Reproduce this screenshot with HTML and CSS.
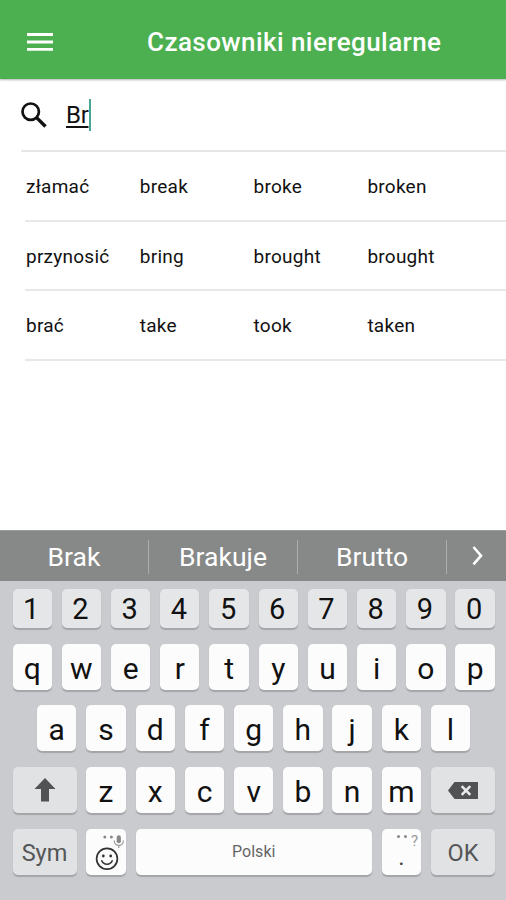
FILE: index.html
```html
<!DOCTYPE html>
<html lang="pl">
<head>
    <meta charset="UTF-8">
    <meta name="viewport" content="width=device-width, initial-scale=1.0">
    <title>Czasowniki nieregularne</title>
    <link rel="stylesheet" href="styles.css">
</head>
<body>
    <header class="topbar">
        <svg class="menu-icon" viewBox="0 0 26 18"><path d="M0 1.5h26M0 9h26M0 16.4h26" stroke="#fff" stroke-width="2.9"/></svg>
        <h1>Czasowniki nieregularne</h1>
    </header>

    <main>
        <div class="search">
            <svg class="search-icon" viewBox="0 0 26 26"><circle cx="9.7" cy="9.7" r="8.2" fill="none" stroke="#111" stroke-width="2.7"/><path d="M15.6 15.6L24.5 24.5" stroke="#111" stroke-width="3.4"/></svg>
            <span class="query">Br</span><span class="caret"></span>
        </div>
        <div class="verbs">
            <div class="verb"><span>złamać</span><span>break</span><span>broke</span><span>broken</span></div>
            <div class="verb"><span>przynosić</span><span>bring</span><span>brought</span><span>brought</span></div>
            <div class="verb"><span>brać</span><span>take</span><span>took</span><span>taken</span></div>
        </div>
    </main>

    <section class="keyboard">
        <div class="suggestions">
            <span>Brak</span>
            <span>Brakuje</span>
            <span>Brutto</span>
            <span class="more"><svg width="12" height="20" viewBox="0 0 12 20"><path d="M1.5 1L9 9.7L1.5 18.4" fill="none" stroke="#fff" stroke-width="2.6"/></svg></span>
        </div>
        <div class="keys">
            <div class="row numbers">
                <span class="key">1</span><span class="key">2</span><span class="key">3</span><span class="key">4</span><span class="key">5</span><span class="key">6</span><span class="key">7</span><span class="key">8</span><span class="key">9</span><span class="key">0</span>
            </div>
            <div class="row">
                <span class="key">q</span><span class="key">w</span><span class="key">e</span><span class="key">r</span><span class="key">t</span><span class="key">y</span><span class="key">u</span><span class="key">i</span><span class="key">o</span><span class="key">p</span>
            </div>
            <div class="row middle">
                <span class="key">a</span><span class="key">s</span><span class="key">d</span><span class="key">f</span><span class="key">g</span><span class="key">h</span><span class="key">j</span><span class="key">k</span><span class="key">l</span>
            </div>
            <div class="row">
                <span class="key wide"><svg width="22" height="24" viewBox="0 0 22 24"><path d="M11 0L21.5 11H15V23.5H7V11H.5Z" fill="#505253"/></svg></span>
                <span class="key">z</span><span class="key">x</span><span class="key">c</span><span class="key">v</span><span class="key">b</span><span class="key">n</span><span class="key">m</span>
                <span class="key wide"><svg width="30" height="17" viewBox="0 0 30 17"><path d="M0 8.5L6.5 0H30V17H6.5Z" fill="#505253"/><path d="M13.7 4.2L22.3 12.8M22.3 4.2L13.7 12.8" stroke="#e8eaeb" stroke-width="2.6"/></svg></span>
            </div>
            <div class="row">
                <span class="key wide label">Sym</span>
                <span class="key">
                    <svg width="39" height="46" viewBox="0 0 39 46">
                        <g fill="#888"><circle cx="17.8" cy="8" r="1.5"/><circle cx="24.4" cy="8" r="1.5"/><rect x="29.7" y="6.3" width="4.2" height="8" rx="2.1"/></g>
                        <path d="M27.2 11.5c0 6.6 9.2 6.6 9.2 0M31.8 16.5v2.5" fill="none" stroke="#999" stroke-width="1.2"/>
                        <circle cx="20" cy="29.7" r="10.4" fill="none" stroke="#333" stroke-width="1.7"/>
                        <circle cx="16.3" cy="27" r="1.4" fill="#333"/><circle cx="23.7" cy="27" r="1.4" fill="#333"/>
                        <path d="M14.5 31.2c2 5.3 9 5.3 11 0" fill="none" stroke="#333" stroke-width="1.5"/>
                    </svg>
                </span>
                <span class="key space">Polski</span>
                <span class="key dot"><span class="hint"><i></i><i></i>?</span>.</span>
                <span class="key wide label">OK</span>
            </div>
        </div>
    </section>
</body>
</html>
```

FILE: styles.css
```css
* { box-sizing: border-box; }
body { margin: 0; height: 900px; display: flex; flex-direction: column; background: #fff; color: #111; font-family: Roboto, "Liberation Sans", sans-serif; overflow: hidden; }
svg { display: block; flex: none; }

.topbar { height: 79px; padding: 4px 0 0 27px; display: flex; align-items: center; background: #4caf50; box-shadow: 0 1px 2px rgba(0, 0, 0, 0.3); }
.menu-icon { width: 26px; height: 18px; }
h1 { margin: 0 0 0 94px; font-size: 26px; font-weight: 500; line-height: 30px; letter-spacing: 0.43px; color: #fff; white-space: nowrap; }

main { flex: 1; }
.search { height: 73px; margin-left: 21px; display: flex; align-items: center; border-bottom: 2px solid #e6e6e6; }
.search-icon { width: 26px; height: 26px; }
.query { margin-left: 19px; padding-top: 1px; font-size: 24px; line-height: 28px; letter-spacing: -0.3px; text-decoration: underline; text-decoration-thickness: 1.5px; text-underline-offset: 3px; }
.caret { width: 2px; height: 32px; background: #45a794; }
.verbs { margin-left: 25px; }
.verb { height: 69.6px; padding: 2px 0 0 1px; display: grid; grid-template-columns: repeat(4, 113.8px); align-items: center; border-bottom: 2px solid #e8e8e8; font-size: 19px; letter-spacing: 0.25px; }

.keyboard { height: 370px; background: #c9cbcf; }
.suggestions { height: 51px; padding-top: 1px; display: flex; align-items: center; background: #878988; border-top: 1px solid #9b9d9c; color: #fff; font-size: 26.5px; }
.suggestions span { width: 149.2px; height: 34px; line-height: 34px; text-align: center; border-right: 1px solid #acaeae; }
.suggestions .more { width: 59px; padding: 0 0 2px 2px; display: flex; align-items: center; justify-content: center; border: 0; }

.keys { padding: 8px 11px 0 12.5px; display: flex; flex-direction: column; gap: 15.7px; }
.row { height: 46px; display: flex; gap: 9.9px; }
.key { flex: 0 0 39.33px; display: flex; align-items: center; justify-content: center; position: relative; padding-top: 3px; border-radius: 5px; background: #fcfcfc; box-shadow: 0 1.5px 1px #a3a5a8; font-size: 30px; }
.key svg { margin-top: -3px; }
.numbers { height: 39px; }
.numbers .key { padding: 1px 2px 0 0; background: #e5e6e8; font-size: 29px; }
.middle { margin-left: 24.6px; }
.wide { flex-basis: 64px; background: #e0e2e3; }
.label { color: #555657; font-size: 23.5px; }
.space { flex: 1; padding: 0; color: #666; font-size: 16px; }
.dot { color: #444; font-size: 24px; padding-top: 10px; }
.hint { position: absolute; top: 4px; right: 3px; display: flex; gap: 4px; color: #999; font-size: 15px; line-height: 17px; }
.hint i { width: 3px; height: 3px; margin-top: 2px; border-radius: 50%; background: #888; }
```
